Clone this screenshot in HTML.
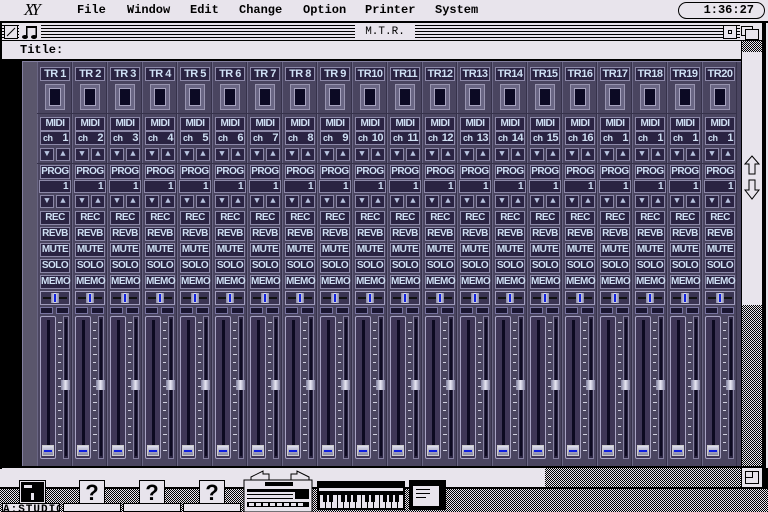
<!DOCTYPE html>
<html><head><meta charset="utf-8"><style>
*{margin:0;padding:0;box-sizing:border-box}
body{width:768px;height:512px;overflow:hidden;background:#e8e4ec;position:relative;font-family:"Liberation Mono",monospace;font-weight:bold}
.a{position:absolute}
.chk{background-color:#e8e4ec;background-image:linear-gradient(45deg,#000 25%,transparent 25%,transparent 75%,#000 75%),linear-gradient(45deg,#000 25%,transparent 25%,transparent 75%,#000 75%);background-size:2px 2px;background-position:0 0,1px 1px}
.menu{top:3px;font-size:12px;color:#000}
.lb{position:absolute;background:#2a2342;border:1px solid #8c88a8;color:#cfe0f4;font-size:10px;line-height:11px;text-align:center;letter-spacing:-0.5px;font-family:"Liberation Sans",sans-serif;font-weight:bold;transform-origin:0 0}
.bt{position:absolute;background:#2a2342;border:1px solid #8c88a8;color:#b8c4e0;font-size:9px;line-height:10px;text-align:center}
</style></head><body>
<div class="a" style="left:0;top:0;width:768px;height:21px;background:#e8e4ec"></div>
<div class="a" style="left:24px;top:0;font-size:17px;font-family:'Liberation Serif',serif;font-style:italic;font-weight:normal;letter-spacing:-3px">XY</div>
<div class="a menu" style="left:77px">File</div>
<div class="a menu" style="left:127px">Window</div>
<div class="a menu" style="left:190px">Edit</div>
<div class="a menu" style="left:239px">Change</div>
<div class="a menu" style="left:303px">Option</div>
<div class="a menu" style="left:365px">Printer</div>
<div class="a menu" style="left:435px">System</div>
<div class="a" style="left:678px;top:2px;width:87px;height:17px;border:1px solid #000;border-radius:9px;font-size:12px;text-align:right;padding-right:10px;line-height:15px">1:36:27</div>
<div class="a" style="left:0;top:21px;width:768px;height:2px;background:#000"></div>
<div class="a" style="left:0;top:23px;width:2px;height:446px;background:#000"></div>
<div class="a" style="left:762px;top:23px;width:4px;height:466px;background:#000"></div>
<div class="a" style="left:2px;top:25px;width:760px;height:15px;background:repeating-linear-gradient(#000 0 1px,#e8e4ec 1px 3px)"></div>
<div class="a" style="left:2px;top:40px;width:760px;height:1px;background:#000"></div>
<div class="a" style="left:4px;top:25px;width:14px;height:14px;background:#e8e4ec;border:1px solid #000"><svg width="12" height="12" style="position:absolute;left:0;top:0"><line x1="2" y1="10" x2="10" y2="2" stroke="#000"/></svg></div>
<div class="a" style="left:19px;top:24px;width:22px;height:16px;background:#e8e4ec"><svg width="22" height="16"><rect x="7" y="2" width="11" height="2" fill="#000"/><rect x="7" y="2" width="1.5" height="11" fill="#000"/><rect x="16.5" y="2" width="1.5" height="11" fill="#000"/><ellipse cx="6" cy="13" rx="3" ry="2" fill="#000"/><ellipse cx="15" cy="13" rx="3" ry="2" fill="#000"/></svg></div>
<div class="a" style="left:355px;top:25px;width:60px;height:15px;background:#e8e4ec;text-align:center;font-size:11px;line-height:15px;font-weight:normal">M.T.R.</div>
<div class="a" style="left:723px;top:25px;width:14px;height:14px;background:#e8e4ec;border:1px solid #000"><div class="a" style="left:4px;top:4px;width:4px;height:4px;border:1px solid #000"></div></div>
<div class="a" style="left:740px;top:25px;width:22px;height:15px;background:#e8e4ec"><div class="a" style="left:1px;top:1px;width:12px;height:10px;border:1px solid #000"></div><div class="a" style="left:5px;top:4px;width:14px;height:11px;border:1px solid #000;background:#e8e4ec"></div></div>
<div class="a" style="left:20px;top:43px;font-size:12px">Title:</div>
<div class="a" style="left:2px;top:59px;width:740px;height:2px;background:#000"></div>
<div class="a" style="left:2px;top:61px;width:20px;height:405px;background:#000"></div>
<div class="a" style="left:22px;top:61px;width:720px;height:405px;background:#4a4560;border-top:1px solid #8480a0;border-left:1px solid #8480a0"></div>
<div class="a" style="left:23px;top:62px;width:14px;height:404px;background:#5a566c"></div>
<div id="mix"></div>
<div class="a" style="left:741px;top:41px;width:1px;height:426px;background:#000"></div>
<div class="a chk" style="left:742px;top:41px;width:20px;height:11px"></div>
<div class="a" style="left:742px;top:52px;width:20px;height:253px;background:#e8e4ec"></div>
<div class="a chk" style="left:742px;top:305px;width:20px;height:162px"></div>
<svg class="a" style="left:743px;top:154px" width="18" height="48"><path d="M9 2 L16 10 L12 10 L12 20 L6 20 L6 10 L2 10 Z" fill="#e8e4ec" stroke="#000"/><path d="M6 26 L12 26 L12 36 L16 36 L9 45 L2 36 L6 36 Z" fill="#e8e4ec" stroke="#000"/></svg>
<div class="a" style="left:0;top:466px;width:762px;height:2px;background:#000"></div>
<div class="a" style="left:2px;top:468px;width:543px;height:19px;background:#e8e4ec"></div>
<div class="a chk" style="left:545px;top:468px;width:196px;height:19px"></div>
<div class="a" style="left:741px;top:468px;width:1px;height:19px;background:#000"></div>
<div class="a" style="left:742px;top:468px;width:20px;height:19px;background:#e8e4ec"><div class="a" style="left:3px;top:3px;width:14px;height:13px;border:1px solid #000"></div><div class="a" style="left:3px;top:3px;width:8px;height:7px;border-right:1px solid #000;border-bottom:1px solid #000"></div></div>
<div class="a" style="left:0;top:487px;width:768px;height:2px;background:#000"></div>
<div class="a chk" style="left:0;top:489px;width:768px;height:23px"></div>
<div class="a" style="left:762px;top:468px;width:6px;height:21px;background:#000"></div>
<div class="a" style="left:19px;top:480px;width:27px;height:24px;background:#e8e4ec;border:1px solid #000;padding:1px"><div style="width:23px;height:20px;background:#000;position:relative"><div class="a" style="left:3px;top:3px;width:8px;height:3px;background:#e8e4ec"></div><div class="a" style="left:10px;top:11px;width:3px;height:7px;background:#e8e4ec"></div></div></div>
<div class="a" style="left:2px;top:503px;width:58px;height:9px;background:#e8e4ec;border:1px solid #000;font-size:11px;line-height:12px;overflow:hidden;letter-spacing:1px">A:STUDIO</div>
<div class="a" style="left:63px;top:503px;width:58px;height:9px;background:#e8e4ec;border:1px solid #000"></div>
<div class="a" style="left:123px;top:503px;width:58px;height:9px;background:#e8e4ec;border:1px solid #000"></div>
<div class="a" style="left:183px;top:503px;width:58px;height:9px;background:#e8e4ec;border:1px solid #000"></div>
<div class="a" style="left:79px;top:480px;width:26px;height:24px;background:#e8e4ec;border:1px solid #000;font-size:22px;line-height:24px;text-align:center;font-family:'Liberation Sans',sans-serif">?</div>
<div class="a" style="left:139px;top:480px;width:26px;height:24px;background:#e8e4ec;border:1px solid #000;font-size:22px;line-height:24px;text-align:center;font-family:'Liberation Sans',sans-serif">?</div>
<div class="a" style="left:199px;top:480px;width:26px;height:24px;background:#e8e4ec;border:1px solid #000;font-size:22px;line-height:24px;text-align:center;font-family:'Liberation Sans',sans-serif">?</div>
<svg class="a" style="left:243px;top:470px" width="206" height="42" id="ic">
<path d="M8 7 L20 1 L20 4 L26 4 L26 10 L8 10Z M66 7 L54 1 L54 4 L48 4 L48 10 L66 10Z" fill="#e8e4ec" stroke="#000"/>
<rect x="1" y="10" width="68" height="32" fill="#e8e4ec" stroke="#000"/>
<rect x="22" y="12" width="28" height="4" fill="#000"/>
<rect x="4" y="19" width="48" height="3" fill="#000"/>
<rect x="52" y="19" width="14" height="10" fill="#000"/>
<g fill="#000"><rect x="4" y="24" width="46" height="1"/><rect x="4" y="28" width="46" height="1"/></g>
<rect x="4" y="32" width="62" height="5" fill="#000"/>
<g fill="#e8e4ec"><rect x="6" y="33" width="5" height="3"/><rect x="13" y="33" width="5" height="3"/><rect x="20" y="33" width="5" height="3"/><rect x="27" y="33" width="5" height="3"/><rect x="34" y="33" width="5" height="3"/><rect x="41" y="33" width="5" height="3"/><rect x="48" y="33" width="5" height="3"/><rect x="55" y="33" width="5" height="3"/></g>
<rect x="74" y="11" width="88" height="29" fill="#000"/>
<rect x="76" y="18" width="84" height="3" fill="#e8e4ec"/>
<rect x="76" y="25" width="84" height="13" fill="#e8e4ec"/>
<g id="keys"></g>
<rect x="166" y="10" width="37" height="30" fill="#000"/>
<rect x="170" y="16" width="26" height="20" fill="#e8e4ec"/>
<g fill="#000"><rect x="173" y="19" width="14" height="1"/><rect x="173" y="23" width="14" height="1"/><rect x="173" y="27" width="10" height="1"/></g>
</svg>
<script>
var kg='';for(var j=0;j<14;j++){kg+='<rect x="'+(76+j*6)+'" y="25" width="1" height="13" fill="#000"/>';}
var bk=[0,1,3,4,5,7,8,10,11,12];for(var j=0;j<bk.length;j++){kg+='<rect x="'+(80+bk[j]*6)+'" y="25" width="4" height="7" fill="#000"/>';}
document.getElementById('keys').innerHTML=kg;
var m=document.getElementById('mix'),h='';
for(var i=0;i<20;i++){
 var x=37+i*35;
 var n=i+1,tr=n<10?'TR '+n:'TR'+n, ch=i<16?(i+1):1;
 h+='<div class="a" style="left:'+x+'px;top:62px;width:35px;height:404px;border-left:1px solid #6a6684;border-right:1px solid #36324a"></div>';
 h+='<div class="a" style="left:'+x+'px;top:113px;width:35px;height:1px;background:#36324a"></div>';
 h+='<div class="a" style="left:'+x+'px;top:163px;width:35px;height:1px;background:#36324a"></div>';
 h+='<div class="lb" style="left:'+(x+3)+'px;top:67px;width:30px;height:14px;font-size:11px;line-height:12px">'+tr+'</div>';
 h+='<div class="a" style="left:'+(x+8)+'px;top:84px;width:20px;height:26px;background:#6a6684;border:1px solid #9894b0;padding:3px"><div style="width:12px;height:18px;background:#0c0a24;border:1px solid #a8a4c0"></div></div>';
 h+='<div class="lb" style="left:'+(x+3)+'px;top:117px;width:30px;height:14px;font-size:10px;line-height:12px">MIDI</div>';
 h+='<div class="lb" style="left:'+(x+3)+'px;top:131px;width:30px;height:14px;text-align:left;padding-left:2px;font-size:9px;line-height:12px">ch<span style="float:right;font-size:11px;padding-right:1px">'+ch+'</span></div>';
 h+='<div class="bt" style="left:'+(x+3)+'px;top:148px;width:14px;height:13px">&#9660;</div><div class="bt" style="left:'+(x+19)+'px;top:148px;width:14px;height:13px">&#9650;</div>';
 h+='<div class="lb" style="left:'+(x+3)+'px;top:165px;width:30px;height:14px">PROG</div>';
 h+='<div class="lb" style="left:'+(x+2)+'px;top:180px;width:32px;height:13px;text-align:right;padding-right:2px">1</div>';
 h+='<div class="bt" style="left:'+(x+3)+'px;top:195px;width:14px;height:13px">&#9660;</div><div class="bt" style="left:'+(x+19)+'px;top:195px;width:14px;height:13px">&#9650;</div>';
 var lb=['REC','REVB','MUTE','SOLO','MEMO'];
 for(var k=0;k<5;k++)h+='<div class="lb" style="left:'+(x+3)+'px;top:'+(211+k*16)+'px;width:30px;height:14px;line-height:12px">'+lb[k]+'</div>';
 h+='<div class="a" style="left:'+(x+3)+'px;top:291px;width:30px;height:14px;background:#3a3452;border:1px solid #a09cbc"><div class="a" style="left:2px;top:5px;width:24px;height:2px;background:#111"></div><div class="a" style="left:10px;top:1px;width:8px;height:10px;background:linear-gradient(90deg,#8888a8,#e0e0f0,#8888a8)"></div><div class="a" style="left:13px;top:2px;width:2px;height:8px;background:#1020e0"></div></div>';
 h+='<div class="a" style="left:'+(x+3)+'px;top:307px;width:13px;height:7px;background:#1a1630;border:1px solid #7874a0"></div><div class="a" style="left:'+(x+19)+'px;top:307px;width:13px;height:7px;background:#1a1630;border:1px solid #7874a0"></div>';
 h+='<div class="a" style="left:'+(x+3)+'px;top:316px;width:16px;height:143px;background:#3e3656;border:1px solid #a8a4c4;border-radius:2px"><div class="a" style="left:6px;top:3px;width:3px;height:136px;background:#0c0a20"></div><div class="a" style="left:1px;top:128px;width:12px;height:11px;background:linear-gradient(#e0e0f0,#8484a4);border:1px solid #ccc"><div class="a" style="left:1px;top:4px;width:8px;height:2px;background:#1020e0"></div></div></div>';
 h+='<div class="a" style="left:'+(x+26)+'px;top:316px;width:6px;height:143px;background:#2a2440;border:1px solid #8480a0"><div class="a" style="left:1px;top:2px;width:2px;height:137px;background:#0c0a20"></div></div>';
 for(var t=0;t<17;t++)h+='<div class="a" style="left:'+(x+21)+'px;top:'+(322+t*8)+'px;width:'+(t%2?3:4)+'px;height:1px;background:#d0d0e0"></div>';
 h+='<div class="a" style="left:'+(x+24)+'px;top:380px;width:9px;height:10px;background:linear-gradient(90deg,#8080a0,#e8e8f4,#8080a0)"></div>';
}
m.innerHTML=h;
</script>
</body></html>
